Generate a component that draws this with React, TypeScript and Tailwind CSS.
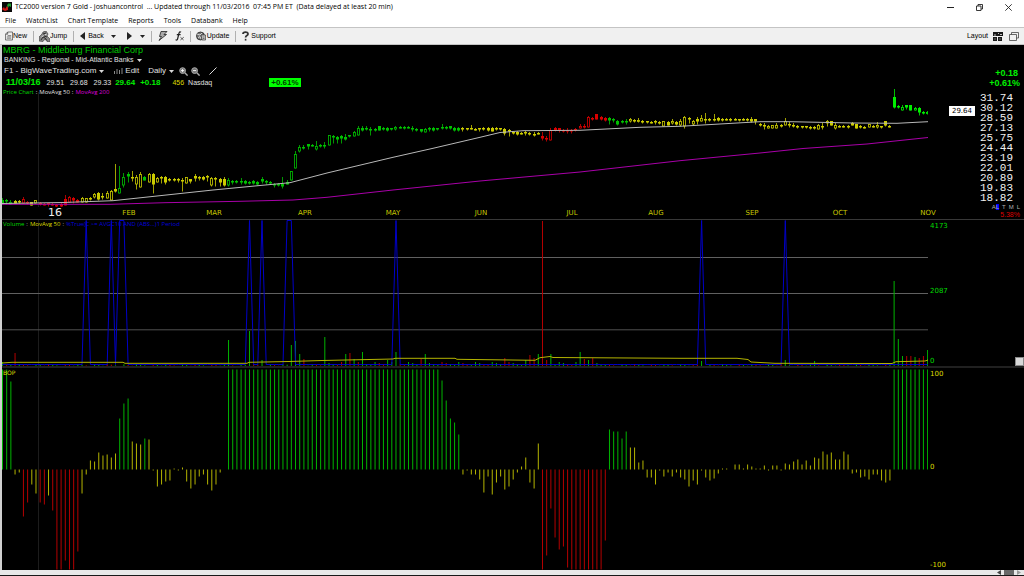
import type { ReactNode } from "react";

const GREEN = "#00b400";
const YELLOW = "#b4b400";
const RED = "#b40000";

const STEP = 4.186;
const barX = (i: number) => 0.5 + STEP * i;

// one token per session: colour (kept until it changes), then high,top,bottom,low; "o" = hollow body
const CANDLES = `
g198,200,204,204 199,200,201,204 200,202,204,204o y200,201,203,203 200,201,202,203 r197,199,203,203o 201,202,203,204 y202,202,205,205 200,200,203,203o r202,203,204,205
203,204,205,205 203,203,204,206 203,204,205,205 204,205,206,207 203,204,206,208 195,199,205,205 196,197,202,202o 197,198,200,203 199,200,202,202 y197,198,202,202o
198,198,202,202o 197,198,199,200 193,194,197,198o 192,193,199,200 193,196,197,199 191,193,198,198o 190,191,200,200o 164,189,191,192 g166,188,193,193o 173,177,185,187o
172,174,176,182 y171,177,178,181 175,177,184,189o 172,174,187,187o g176,177,180,180 y173,174,182,182o 173,174,184,193 177,178,182,182o 176,177,178,183 176,177,182,184
178,179,180,181 178,179,180,181 178,179,180,182 178,180,181,191 177,177,183,183o 179,179,181,183 174,176,178,181 176,177,178,180 176,177,179,180 175,176,177,181
177,178,185,186o 177,178,179,186 178,179,182,186 177,179,185,186 g178,180,185,186o 180,181,182,184 180,181,182,183 178,181,182,184 180,181,183,184 181,182,183,184
180,181,183,184 181,182,184,185 177,179,181,183 180,181,182,184 181,182,183,184 183,184,185,187 183,184,185,186 177,184,186,188 180,182,184,184 171,171,180,180o
151,154,168,168o 145,147,151,152o 145,147,148,149 144,144,146,149 144,145,146,146 141,146,149,150o 144,145,146,147 142,145,146,148 135,135,145,145o 135,136,137,143
136,137,139,143 135,136,138,143 134,137,139,140 135,135,136,137 131,132,136,136o 126,128,135,135o 126,128,130,131 126,128,129,130 127,129,130,135 128,129,130,131
126,126,130,130 127,128,129,130 127,128,130,131 128,128,129,130 126,127,129,130o 126,127,128,128 126,127,128,129 126,127,128,128 126,128,129,131 128,129,130,131
129,129,131,132 128,129,132,132o 127,128,129,131 127,128,130,131 128,128,129,130 124,127,128,129 126,127,128,129 126,126,128,129 127,128,130,131 127,128,130,131
y127,128,129,131 128,128,129,130 125,128,129,129 128,129,130,130 128,128,129,131 127,128,129,130 127,128,130,131 127,128,131,131 127,128,129,130 128,128,129,130
128,129,133,135 129,130,131,136 132,132,133,134 131,132,134,135 132,133,134,134 131,132,133,135 132,133,134,135 132,134,135,136 132,133,134,134 r132,136,138,140
136,138,139,141 128,130,140,140o 127,128,130,131 128,128,130,132 129,130,131,132 128,130,131,133 129,130,131,133 128,129,130,131 124,126,128,128o 124,126,127,128
116,117,127,127o 117,118,119,120 114,114,119,119 116,117,119,120 117,118,120,121 g117,118,120,124 118,119,120,122 120,121,124,125 120,121,122,123 119,121,122,124
y118,119,121,122o 119,120,121,122 118,120,121,122o 120,121,122,123 121,121,122,123 121,122,123,123 120,121,122,124 121,122,123,124 121,121,126,126o 121,122,125,125
119,121,123,124o 121,122,124,125 119,121,125,126o 116,117,126,128o 117,118,119,123 120,121,124,125o 117,119,121,124 115,118,121,121o 113,119,120,123 118,119,120,121
114,119,120,121 117,118,120,121 118,119,120,121 118,119,120,120 118,119,120,121 118,119,120,120 119,119,120,121 118,119,120,120 118,119,120,121 117,119,121,122
119,119,121,124 123,124,125,126 123,125,126,129 125,126,128,128o 125,125,128,128o 123,125,128,128o 124,125,126,127 118,121,125,125o 122,124,125,127 123,125,126,127
125,126,127,128 126,126,127,128 126,126,127,128 126,127,128,129 126,127,128,129 124,125,129,129o 123,126,127,129 120,121,123,126o 121,121,125,125 123,125,128,129o
125,126,127,127 125,126,127,127 125,126,127,128 122,123,125,125 124,124,128,128 125,126,127,128 126,127,128,128 124,124,127,127o 125,126,127,127 122,125,127,128o
126,126,127,128 121,121,125,126 125,126,127,127 g89,97,107,108 105,106,107,108 105,107,110,110o 105,105,107,109 105,105,110,110 107,108,110,110o 107,108,112,115
111,112,113,114 111,112,113,114o`;

const MA50 =
    "0,203.5 61,202.5 111,200.7 155,196 211,190 258,185.5 288,182.7 325,173 391,157.3 431,148.3 478,137.3 498,132.5 521,130.7 578,130.3 638,127.3 678,126.3 758,121.7 788,121.7 851,123 895,123.3 926,121.7";
const MA200 =
    "0,204.3 108,204.3 163,202.7 238,201.3 291,200 325,197.3 391,190 478,181 578,172 678,160.7 758,153 801,148.5 865,144 926,137.5";
const VOLUME_MA =
    "0,363 10,362.3 121,362.3 123,363.3 245,363.3 247,362.3 287,361.5 320,360.5 391,359 393,358.3 453,358.3 455,359.3 533,360.3 538,357.7 548,356.5 551,357.5 678,358.3 735,358.3 746,359.5 749,362 773,363.3 890,363.5 894,361.7 923,361 926,360";

// sessions where the scan condition was true
const SIGNALS = [20, 26, 28, 29, 59, 62, 68, 69, 94, 167, 187];

const VOLUME_SPIKES: Record<number, [number, string]> = {
    0: [4, GREEN], 3: [13, RED], 54: [26, GREEN], 59: [35, GREEN], 62: [6, GREEN],
    69: [21, GREEN], 70: [25, GREEN], 71: [12, GREEN], 72: [7, RED], 77: [29, GREEN],
    82: [12, GREEN], 83: [13, RED], 84: [7, GREEN], 86: [14, GREEN], 92: [6, GREEN],
    94: [14, GREEN], 100: [7, RED], 101: [12, GREEN], 120: [8, RED], 125: [6, GREEN],
    126: [11, RED], 127: [8, RED], 128: [12, GREEN], 129: [145, RED], 130: [6, RED],
    131: [12, GREEN], 138: [14, GREEN], 139: [7, RED], 140: [6, GREEN], 141: [8, RED],
    167: [5, GREEN], 187: [6, GREEN], 194: [5, GREEN], 213: [85, GREEN], 214: [27, GREEN],
    215: [10, GREEN], 216: [10, RED], 217: [10, RED], 218: [9, GREEN], 219: [8, RED],
    220: [10, RED], 221: [16, GREEN],
};

const BOP = [
    100, 100, 88, -5, -3, -47, -33, -15, -24, -33, -35, -26, -41, -100, -100, -91, -100, -100, -82, -24,
    -5, 9, 8, 17, 14, 15, 12, 16, 51, 66, 71, 28, 26, 25, 31, 30, -1, -17, -15, -12,
    -11, 1, -1, 2, -12, -19, -15, -7, -5, -15, -21, -15, -3, 0,
    ...Array(51).fill(100),
    89, 69, 51, 47, 35, -5, -1, -5, -5, -10, -23, -7, -25, -13, -7, -20, -17, -10, -3, 3,
    12, -13, -19, 26, -100, -86, -39, -68, -80, -77, -98,
    ...Array(8).fill(-100),
    -71, 40, 38, 38, 31, 38, 22, 22, 7, 9, -8, -8, -15, -1, -7, -3, -7, -3, -8, -10,
    -17, -11, -15, -1, -8, -11, -9, -4, 1, 1, 0, 5, 5, 1, 5, 3, 1, 1, 4, -1,
    4, 4, -1, 6, 5, 8, 10, 5, 9, 4, 12, 11, 18, 15, 17, 10, 10, 18, 15, -4,
    -3, -8, -7, -10, -5, -5, -11, -13, -11,
    ...Array(9).fill(100),
];

const MONTHS = [
    { label: "FEB", x: 127 },
    { label: "MAR", x: 212 },
    { label: "APR", x: 303 },
    { label: "MAY", x: 391 },
    { label: "JUN", x: 479 },
    { label: "JUL", x: 570 },
    { label: "AUG", x: 654 },
    { label: "SEP", x: 750 },
    { label: "OCT", x: 838 },
    { label: "NOV", x: 926 },
];

const PRICES = ["31.74", "30.12", "28.59", "27.13", "25.75", "24.44", "23.19", "22.01", "20.89", "19.83", "18.82"];

function Plot({ viewBox, label, children }: { viewBox: string; label: string; children: ReactNode }) {
    return (
        <svg
            viewBox={viewBox}
            preserveAspectRatio="none"
            role="img"
            aria-label={label}
            className="block h-full min-h-0 w-full min-w-0"
        >
            {children}
        </svg>
    );
}

function Candles() {
    let color = "g";
    return (
        <>
            {CANDLES.trim().split(/\s+/).map((token, i) => {
                if (/^[gyr]/.test(token)) color = token[0];
                const [high, top, bottom, low] = token.replace(/[a-z]/g, "").split(",").map(Number);
                const hollow = token.endsWith("o");
                const x = Math.round(barX(i) - 0.5) + 0.5;
                const stroke =
                    color === "g"
                        ? i > 212 ? "#00f000" : "#00c000"
                        : color === "y"
                          ? "#cccc00"
                          : "#d80000";
                return (
                    <g key={i} stroke={stroke} fill={hollow ? "#000" : stroke}>
                        <path d={`M${x} ${high}V${low + 0.5}`} strokeWidth={0.8} />
                        {hollow ? (
                            <rect x={x - 1} y={top + 0.5} width={2} height={Math.max(bottom - top - 0.5, 1)} strokeWidth={0.8} />
                        ) : (
                            <rect x={x - 1.5} y={top} width={3} height={bottom - top + 0.5} stroke="none" />
                        )}
                    </g>
                );
            })}
        </>
    );
}

function signalPath() {
    let d = "M0 364.5";
    for (let i = 0; i < 222; i++) {
        d += `L${barX(i).toFixed(1)} ${SIGNALS.includes(i) ? 220.5 : 364.5}`;
    }
    return d;
}

function VolumeBars() {
    return (
        <>
            {BOP.map((_, i) => {
                const [height, color] = VOLUME_SPIKES[i] ?? [
                    i > 76 && i < 145 ? 1 + ((i * 7) % 4) : ((i * 5) % 7) / 3,
                    (i * 11) % 5 < 2 ? RED : GREEN,
                ];
                return <path key={i} d={`M${barX(i)} 366V${366 - height}`} stroke={color} />;
            })}
        </>
    );
}

function BopBars() {
    return (
        <>
            {BOP.map((value, i) => (
                <path
                    key={i}
                    d={`M${barX(i)} 469.5V${469.5 - value}`}
                    stroke={value >= 31 ? GREEN : value <= -33 ? RED : YELLOW}
                />
            ))}
        </>
    );
}

function Caret({ className = "text-[#222]" }: { className?: string }) {
    return (
        <svg viewBox="0 0 5 3" className={`h-[3px] w-[5px] shrink-0 ${className}`} aria-hidden="true">
            <path d="M0 0H5L2.5 3Z" fill="currentColor" />
        </svg>
    );
}

function Divider() {
    return <span className="h-[11px] w-px shrink-0 bg-[#b0b0b0]" />;
}

function Magnifier({ sign }: { sign: string }) {
    return (
        <svg viewBox="0 0 9 9" className="size-[9px]" fill="none" aria-hidden="true">
            <circle cx="3.6" cy="3.6" r="2.9" fill="#777" stroke="#aaa" />
            <path d={sign} stroke="#fff" strokeWidth=".9" />
            <path d="M5.8 5.8L8.6 8.6" stroke="#aaa" strokeWidth="1.4" />
        </svg>
    );
}

function TitleBar() {
    return (
        <header className="flex h-[14px] items-center bg-white pr-3 pl-[2px]">
            <svg viewBox="0 0 10 10" className="size-[10px] shrink-0" aria-hidden="true">
                <path d="M0 0H10V10H0Z" fill="#080808" />
                <path d="M0 7L2 5L3 7L5 4L6 5V8L3 9L1 8Z" fill="#d21818" />
                <path d="M5 3L7 1L8 2L9 1V5L7 4L6 6Z" fill="#20a030" />
            </svg>
            <h1 className="ml-[3px] grow font-['Open_Sans',sans-serif] text-[7px] leading-[14px] whitespace-pre text-black">
                TC2000 version 7 Gold - joshuancontrol  ... Updated through 11/03/2016  07:45 PM ET  (Data delayed at
                least 20 min)
            </h1>
            <div className="flex items-center gap-[22px]">
                <button type="button" aria-label="Minimize">
                    <svg viewBox="0 0 7 7" className="size-[7px]">
                        <path d="M0 3.5H7" stroke="#222" />
                    </svg>
                </button>
                <button type="button" aria-label="Restore">
                    <svg viewBox="0 0 7 7" className="size-[7px]" fill="none" stroke="#222">
                        <path d="M.5 2H5V6.5H.5ZM2 2V.5H6.5V5H5" strokeWidth=".9" />
                    </svg>
                </button>
                <button type="button" aria-label="Close">
                    <svg viewBox="0 0 7 7" className="size-[7px]" stroke="#222">
                        <path d="M.3 .3L6.7 6.7M6.7 .3L.3 6.7" strokeWidth=".9" />
                    </svg>
                </button>
            </div>
        </header>
    );
}

function MenuBar() {
    return (
        <nav className="flex h-[13px] items-center gap-[10px] bg-white pl-[5px] font-['Open_Sans',sans-serif] text-[7px] leading-[13px] text-black">
            {["File", "WatchList", "Chart Template", "Reports", "Tools", "Databank", "Help"].map((item) => (
                <button key={item} type="button">
                    {item}
                </button>
            ))}
        </nav>
    );
}

function Toolbar() {
    return (
        <div className="flex h-[18px] items-center border-t border-b border-[#c4c4c4] bg-[#f0f0f0] pr-[5px] pl-[5px] text-[7px] leading-[16px] text-black">
            <button type="button" className="flex items-center">
                <svg viewBox="0 0 9 10" className="h-[10px] w-[8px]" fill="none" stroke="#444" aria-hidden="true">
                    <path d="M3 .5H8.5V9.5H.5V3ZM3 .5V3H.5" strokeWidth=".8" />
                    <path d="M3 4.5H7M2 6H7M2 7.5H7" strokeWidth=".7" />
                </svg>
                New
            </button>
            <span className="w-[6px]" />
            <Divider />
            <span className="w-[5px]" />
            <button type="button" className="flex items-center">
                <svg viewBox="0 0 11 11" className="size-[11px]" aria-hidden="true">
                    <path d="M0 10V6L3 3L4 1L7 0L9 3L8 5L11 8V10.5H8L6 8L4 10.5Z" fill="#888" stroke="#333" strokeWidth=".6" />
                    <path d="M2 9L4 6L6 7L8 9.5M4 3L7 2M5 5L8 6" stroke="#222" strokeWidth=".9" fill="none" />
                    <path d="M2.5 6L4.5 4.5M6 3.5H7.5" stroke="#eee" strokeWidth=".8" />
                </svg>
                Jump
            </button>
            <span className="w-[6px]" />
            <Divider />
            <span className="w-[6px]" />
            <button type="button" className="flex items-center gap-[3px]">
                <svg viewBox="0 0 5 8" className="h-[8px] w-[5px]" aria-hidden="true">
                    <path d="M5 0V8L0 4Z" fill="#222" />
                </svg>
                Back
            </button>
            <button type="button" aria-label="Back history" className="ml-[7px]">
                <Caret />
            </button>
            <button type="button" aria-label="Forward" className="ml-[11px]">
                <svg viewBox="0 0 5 8" className="h-[8px] w-[5px]">
                    <path d="M0 0V8L5 4Z" fill="#222" />
                </svg>
            </button>
            <button type="button" aria-label="Forward history" className="ml-[8px]">
                <Caret />
            </button>
            <span className="w-[6px]" />
            <Divider />
            <span className="w-[6px]" />
            <button type="button" aria-label="Quick tools">
                <svg viewBox="0 0 10 10" className="size-[10px]">
                    <path d="M3 .5H9L6 3.5H8.5L1 9.5L3.5 5.5H1.5Z" fill="#aaa" stroke="#222" strokeWidth=".8" />
                </svg>
            </button>
            <button type="button" aria-label="Formula" className="ml-[7px]">
                <svg viewBox="0 0 10 10" className="size-[10px]" fill="none" stroke="#222">
                    <path d="M6 1.2C4.8 .2 4.2 1 3.8 3L2.7 7.5C2.3 9.2 1.6 9.4 .6 8.6M1.8 3.6H5.6" strokeWidth="1.2" />
                    <path d="M5.4 6.2L8.6 9M8.8 6.2L5.4 9" strokeWidth=".7" />
                </svg>
            </button>
            <span className="w-[5px]" />
            <Divider />
            <span className="w-[5px]" />
            <button type="button" className="flex items-center gap-px">
                <svg viewBox="0 0 10 10" className="size-[10px]" aria-hidden="true">
                    <circle cx="4.5" cy="5" r="4" fill="#777" stroke="#222" strokeWidth=".8" />
                    <path d="M1 3L4 4L6 2M2 7L4 5.5L5 8" stroke="#ddd" strokeWidth=".9" fill="none" />
                    <path d="M5 4H9.6V9H6Z" fill="#ccc" stroke="#333" strokeWidth=".7" />
                    <path d="M6.5 6H8.5M6.8 7.5H8.5" stroke="#333" strokeWidth=".6" />
                </svg>
                Update
            </button>
            <span className="w-[6px]" />
            <Divider />
            <span className="w-[6px]" />
            <button type="button" className="flex items-center gap-[2px]">
                <svg viewBox="0 0 7 10" className="h-[10px] w-[7px]" fill="none" stroke="#333" aria-hidden="true">
                    <path d="M1 3C1 .6 6 .4 6 3C6 4.8 3.6 4.4 3.6 6.6" strokeWidth="1.8" />
                    <path d="M3.6 7.8V9.6" strokeWidth="1.6" />
                </svg>
                Support
            </button>
            <div className="grow" />
            <button type="button" className="flex items-center gap-[5px]">
                Layout
                <svg viewBox="0 0 10 9" className="h-[9px] w-[10px]" aria-hidden="true">
                    <path d="M0 0H10V4H0ZM0 5H4V9H0ZM5 5H9V9H5Z" fill="#181818" />
                    <path d="M5 1.5H6M7 2.5H9M1 3H3M1.5 7H2.5M6.5 7H7.5" stroke="#eee" strokeWidth=".8" />
                </svg>
            </button>
            <button type="button" aria-label="Cascade windows" className="ml-[6px]">
                <svg viewBox="0 0 10 9" className="h-[9px] w-[10px]" fill="#f0f0f0" stroke="#444">
                    <path d="M2.5 .5H9.5V6H2.5Z" strokeWidth=".8" />
                    <path d="M.5 2.5H7.5V8.5H.5Z" strokeWidth=".8" />
                </svg>
            </button>
        </div>
    );
}

function PriceHeader() {
    return (
        <div className="absolute top-0 left-0 pl-px text-[8px] whitespace-nowrap text-[#e0e0e0]">
            <h2 className="text-[9px] leading-[10px] text-[#00c800]">MBRG - Middleburg Financial Corp</h2>
            <button type="button" className="flex items-center gap-[3px] pl-px text-[7px] leading-[10px]">
                BANKING - Regional - Mid-Atlantic Banks
                <Caret className="text-[#d8d8d8]" />
            </button>
            <div className="flex items-center pl-px leading-[12px]">
                <button type="button" className="flex items-center gap-[3px]">
                    F1 - BigWaveTrading.com
                    <Caret className="text-[#d8d8d8]" />
                </button>
                <button type="button" className="ml-[10px] flex items-center gap-[2px]">
                    <svg viewBox="0 0 9 8" className="h-[8px] w-[9px]" stroke="#8a8a8a" aria-hidden="true">
                        <path d="M.5 4V7M3 2V7M5.5 3V7M8 1V7" />
                    </svg>
                    Edit
                </button>
                <button type="button" className="ml-[9px] flex items-center gap-[3px]">
                    Daily
                    <Caret className="text-[#d8d8d8]" />
                </button>
                <button type="button" aria-label="Zoom in" className="ml-[5px]">
                    <Magnifier sign="M2 3.6H5.2M3.6 2V5.2" />
                </button>
                <button type="button" aria-label="Zoom out" className="ml-[3px]">
                    <Magnifier sign="M2 3.6H5.2" />
                </button>
                <button type="button" aria-label="Draw line" className="ml-[9px]">
                    <svg viewBox="0 0 8 8" className="size-[8px]">
                        <path d="M.5 7.5L7.5 .5" stroke="#ddd" />
                    </svg>
                </button>
            </div>
            <div className="flex items-center pl-[3px] text-[7px] leading-[11px]">
                <span className="text-[9px] font-bold text-[#00f000]">11/03/16</span>
                <span className="ml-[6px]">29.51</span>
                <span className="ml-[6px]">29.68</span>
                <span className="ml-[6px]">29.33</span>
                <span className="ml-[4px] text-[8px] font-bold text-[#00f000]">29.64</span>
                <span className="ml-[5px] text-[8px] font-bold text-[#00f000]">+0.18</span>
                <span className="ml-[12px] text-[#dcdc00]">456</span>
                <span className="ml-[4px]">Nasdaq</span>
                <span className="ml-[57px] bg-[#00ff00] px-[2px] text-[8px] leading-[9px] font-bold text-[#003c00]">
                    +0.61%
                </span>
            </div>
            <div className="flex gap-[2px] font-['Open_Sans',sans-serif] text-[6px] leading-[9px]">
                <span className="text-[#00dc00]">Price Chart</span>
                <span>:</span>
                <span>MovAvg 50</span>
                <span>:</span>
                <span className="text-[#dc00dc]">MovAvg 200</span>
            </div>
        </div>
    );
}

function PricePanel() {
    return (
        <section className="relative grid min-h-0 grid-cols-[minmax(0,1fr)_96px] grid-rows-[minmax(0,1fr)]">
            <div className="grid min-h-0 grid-rows-[minmax(0,1fr)_12px]">
                <Plot viewBox="0 45 926 162" label="Price chart">
                    <path d="M36.5 92V207" stroke="#1c1c1c" />
                    <Candles />
                    <polyline points={MA200} fill="none" stroke="#a800a8" />
                    <polyline points={MA50} fill="none" stroke="#b8b8b8" />
                </Plot>
                <div className="relative font-['DejaVu_Sans',sans-serif] text-[7px] leading-[12px] text-[#c8c800]">
                    <span
                        className="absolute -translate-x-1/2 text-[11px] text-[#f0f0f0]"
                        style={{ left: `${(53 / 926) * 100}%` }}
                    >
                        16
                    </span>
                    {MONTHS.map(({ label, x }) => (
                        <span key={label} className="absolute -translate-x-1/2" style={{ left: `${(x / 926) * 100}%` }}>
                            {label}
                        </span>
                    ))}
                </div>
            </div>
            <div className="flex min-h-0 flex-col pt-[23px] pr-[4px] text-right">
                <div className="text-[9px] leading-[10px] font-bold text-[#00f000]">
                    <p className="pr-[2px]">+0.18</p>
                    <p>+0.61%</p>
                </div>
                <ul className="mt-[5px] pr-[7px] font-['Liberation_Mono',monospace] text-[11px] leading-[10px] text-[#f0f0f0]">
                    {PRICES.map((price) => (
                        <li key={price}>{price}</li>
                    ))}
                </ul>
                <div className="flex justify-end gap-[3px] text-[6px] leading-[8px] text-[#b0b0b0]">
                    <span>
                        A<span className="bg-[#0000ff]">L</span>
                    </span>
                    <span>T</span>
                    <span>M</span>
                    <span>L</span>
                </div>
                <p className="text-[7px] leading-[8px] text-[#dc0000]">5.38%</p>
            </div>
            <PriceHeader />
            <span className="absolute top-[61px] right-[49px] bg-white px-[3px] font-['DejaVu_Sans',sans-serif] text-[7px] leading-[10px] text-black">
                29.64
            </span>
        </section>
    );
}

function Axis({ labels, className }: { labels: string[]; className: string }) {
    return (
        <div
            className={`flex min-h-0 flex-col justify-between pl-[2px] font-['DejaVu_Sans',sans-serif] text-[7px] leading-[9px] ${className}`}
        >
            <span>{labels[0]}</span>
            <span className="pb-[6px]">{labels[1]}</span>
            <span>{labels[2]}</span>
        </div>
    );
}

function VolumePanel() {
    return (
        <section className="relative grid min-h-0 grid-cols-[minmax(0,1fr)_96px] grid-rows-[minmax(0,1fr)] border-t border-[#383838]">
            <Plot viewBox="0 220 926 146" label="Volume">
                <path d="M36.5 220V366" stroke="#1c1c1c" />
                <path d="M0 257.5H926M0 293.5H926" stroke="#606060" />
                <path d="M0 329.8H926" stroke="#505050" />
                <VolumeBars />
                <path d={signalPath()} fill="none" stroke="#0000c8" strokeLinejoin="bevel" />
                <polyline points={VOLUME_MA} fill="none" stroke="#b4b400" />
            </Plot>
            <Axis labels={["4173", "2087", "0"]} className="pt-[2px] text-[#00dc00]" />
            <div className="absolute top-0 left-0 flex gap-[2px] pl-px font-['Open_Sans',sans-serif] text-[6px] leading-[9px] whitespace-nowrap">
                <span className="text-[#00dc00]">Volume</span>
                <span className="text-[#a0a0a0]">:</span>
                <span className="text-[#dcdc00]">MovAvg 50</span>
                <span className="text-[#a0a0a0]">:</span>
                <span className="text-[#0000dc]">{"%True(C >= AVGC10 AND (ABS...)1 Period"}</span>
            </div>
            <button
                type="button"
                aria-label="Resize panel"
                className="absolute right-0 bottom-0 size-[9px] border border-[#888] bg-[#d8d8d8]"
            />
        </section>
    );
}

function BopPanel() {
    return (
        <section className="relative grid min-h-0 grid-cols-[minmax(0,1fr)_96px] grid-rows-[minmax(0,1fr)] border-t-2 border-[#202020]">
            <Plot viewBox="0 368 926 202" label="Balance of power">
                <path d="M36.5 368V570" stroke="#1c1c1c" />
                <BopBars />
            </Plot>
            <Axis labels={["100", "0", "-100"]} className="pt-[2px] text-[#dcdc00]" />
            <span className="absolute top-0 left-0 pl-px font-['DejaVu_Sans',sans-serif] text-[6px] leading-[9px] text-[#dcdc00]">
                BOP
            </span>
        </section>
    );
}

function ScrollBar() {
    return (
        <div className="border-b border-[#181818]">
            <div className="flex h-[5px] items-center justify-end gap-[3px] bg-[#e8e8e8] pr-[3px]">
                <button type="button" aria-label="Scroll left">
                    <svg viewBox="0 0 4 5" className="h-[5px] w-[4px]">
                        <path d="M4 0V5L0 2.5Z" fill="#444" />
                    </svg>
                </button>
                <span className="h-[5px] w-[10px] bg-[#686868]" />
                <button type="button" aria-label="Scroll right">
                    <svg viewBox="0 0 4 5" className="h-[5px] w-[4px]">
                        <path d="M0 0V5L4 2.5Z" fill="#999" />
                    </svg>
                </button>
            </div>
        </div>
    );
}

export default function App() {
    return (
        <div className="flex h-screen flex-col bg-black font-['Liberation_Sans',sans-serif]">
            <TitleBar />
            <MenuBar />
            <Toolbar />
            <main className="grid min-h-0 grow grid-rows-[174fr_147fr_204fr] border-l-2 border-[#d0d0d0] bg-black">
                <PricePanel />
                <VolumePanel />
                <BopPanel />
            </main>
            <ScrollBar />
        </div>
    );
}
